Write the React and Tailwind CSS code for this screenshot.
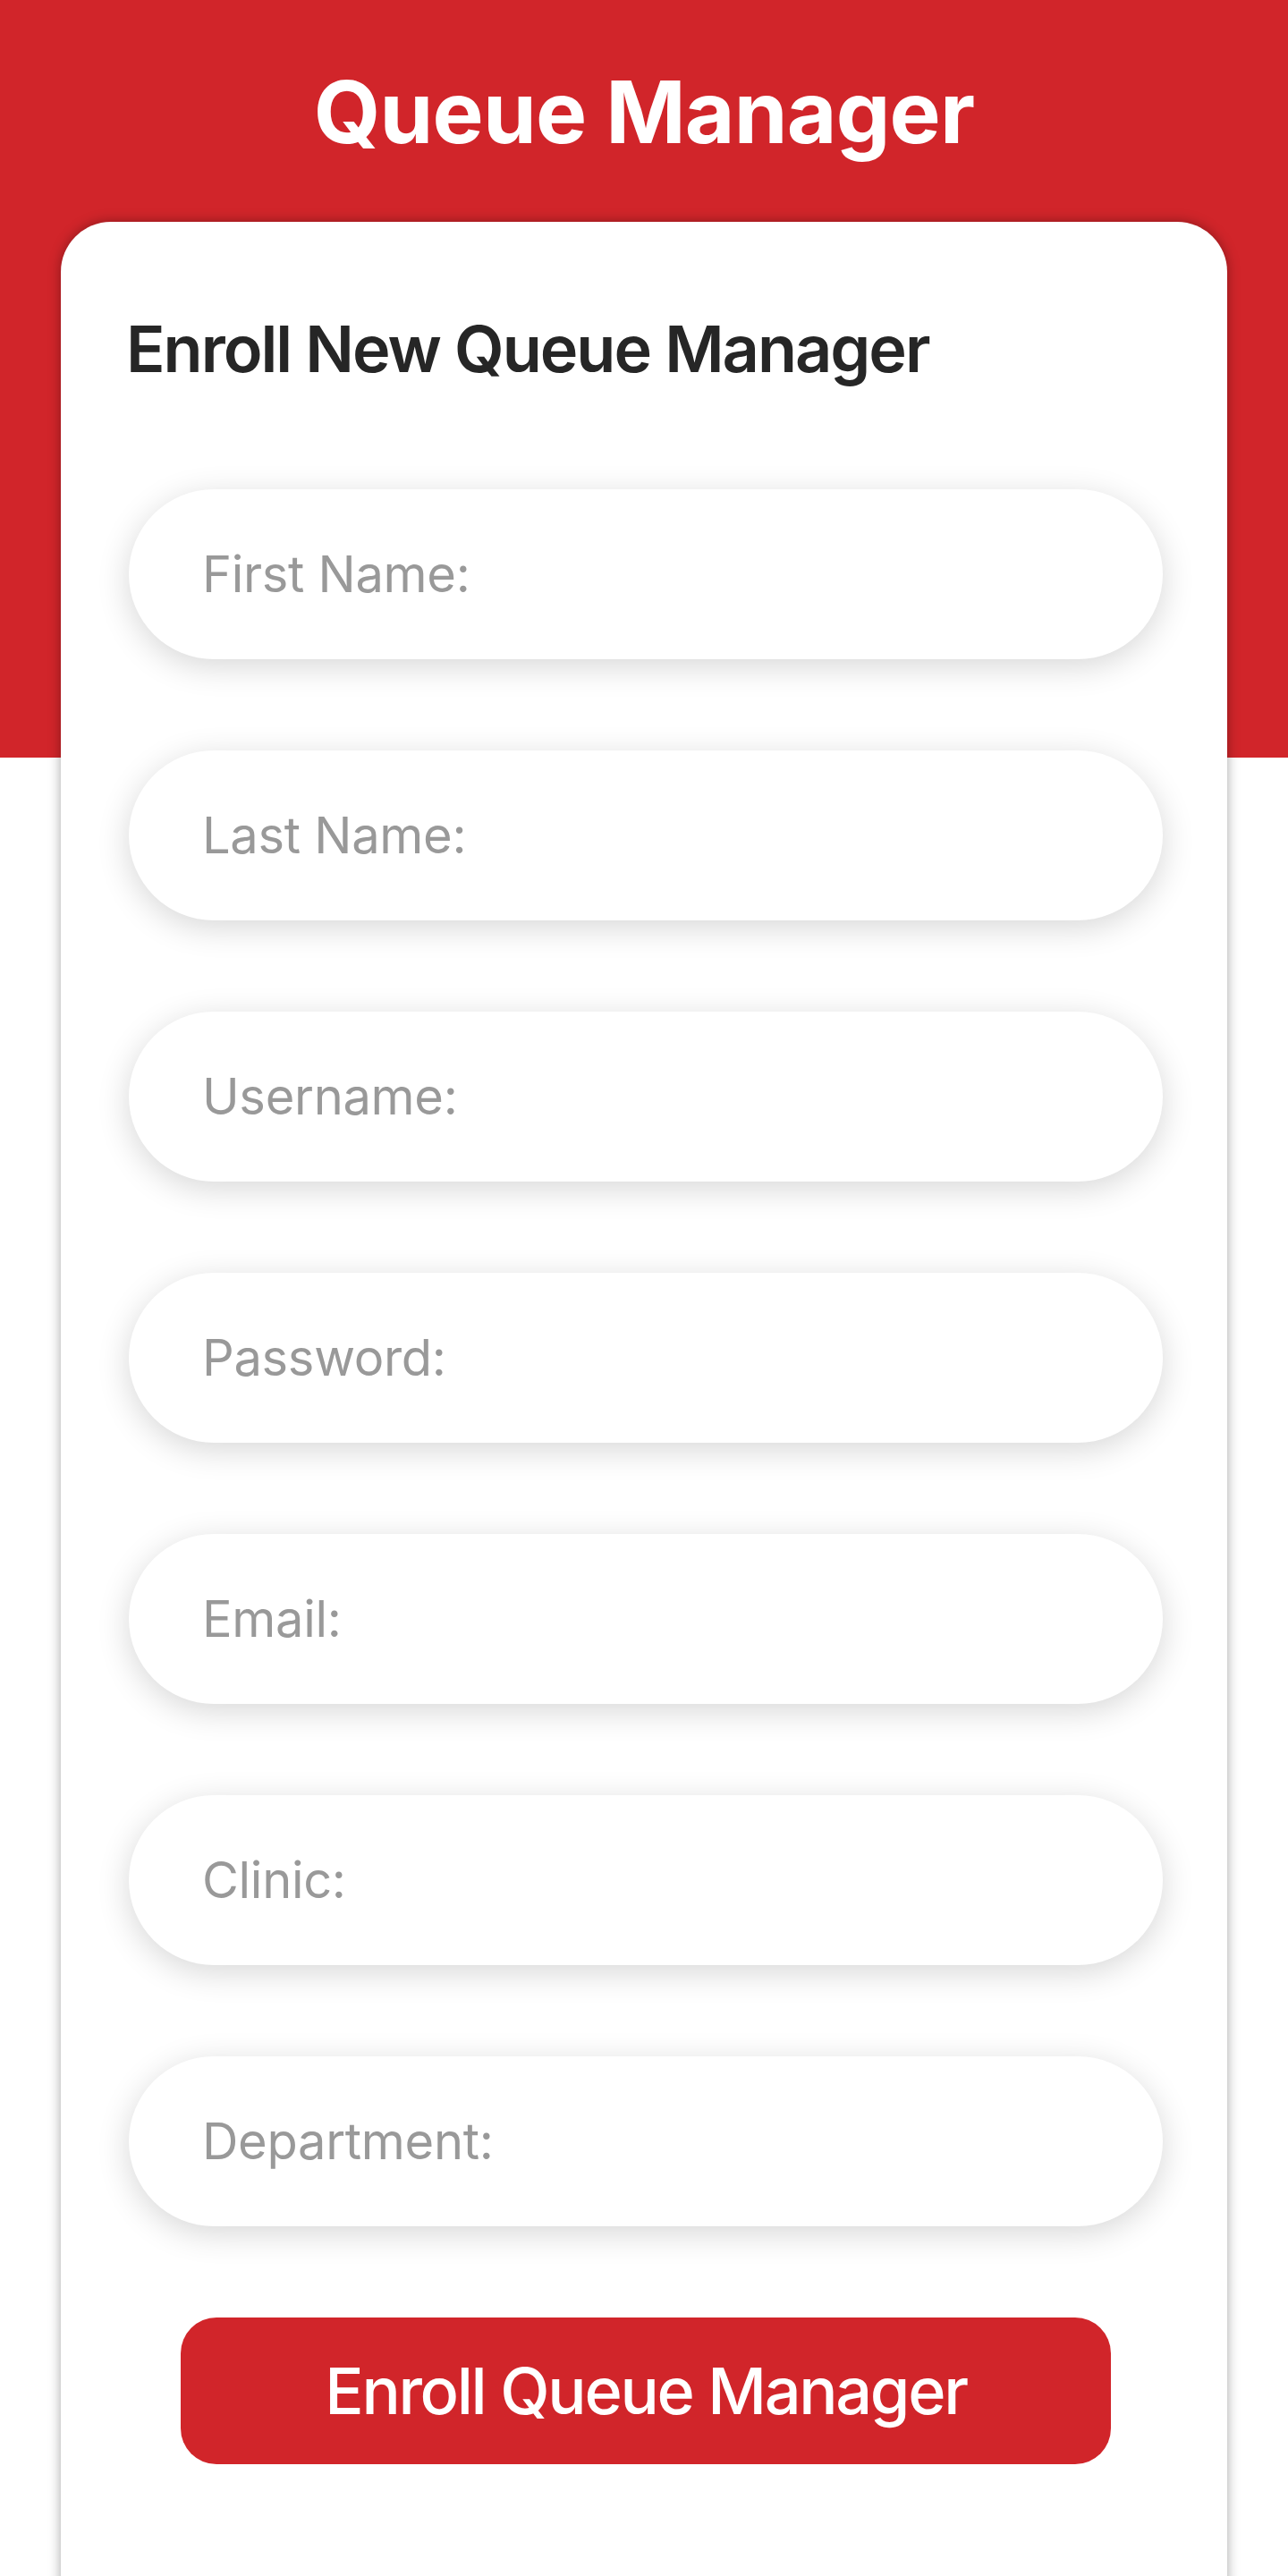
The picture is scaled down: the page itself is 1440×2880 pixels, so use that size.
import React from "react";

const fields = [
  "First Name:",
  "Last Name:",
  "Username:",
  "Password:",
  "Email:",
  "Clinic:",
  "Department:",
];

export default function App() {
  return (
    <div className="min-h-[2880px] bg-white font-['Inter','Noto_Sans',sans-serif]">
      <div className="h-[847px] bg-[#D1252A] pt-[77px]">
        <h1 className="text-center text-[96px] font-bold leading-none tracking-[-0.8px] text-white">
          Queue Manager
        </h1>
      </div>
      <div className="mx-[68px] -mt-[599px] rounded-t-[56px] bg-white pl-[76px] pt-[106px] pb-[220px] shadow-[0_0_14px_rgba(0,0,0,0.35)]">
        <h2 className="-ml-[3px] text-[72px] font-semibold leading-none tracking-[-2px] text-[#262626]">
          Enroll New Queue Manager
        </h2>
        <form className="mt-[121px] flex w-[1156px] flex-col gap-[102px]">
          {fields.map((f) => (
            <input
              key={f}
              placeholder={f}
              className="h-[190px] w-full rounded-full bg-white pl-[82px] text-[56px] tracking-[-0.3px] text-[#262626] placeholder:text-[#999999] shadow-[0_8px_36px_rgba(0,0,0,0.16)] outline-none"
            />
          ))}
          <button
            type="button"
            className="mx-auto h-[164px] w-[1040px] rounded-[40px] bg-[#D1252A] text-[72px] font-medium leading-none tracking-[-2.3px] text-white"
          >
            Enroll Queue Manager
          </button>
        </form>
      </div>
    </div>
  );
}
